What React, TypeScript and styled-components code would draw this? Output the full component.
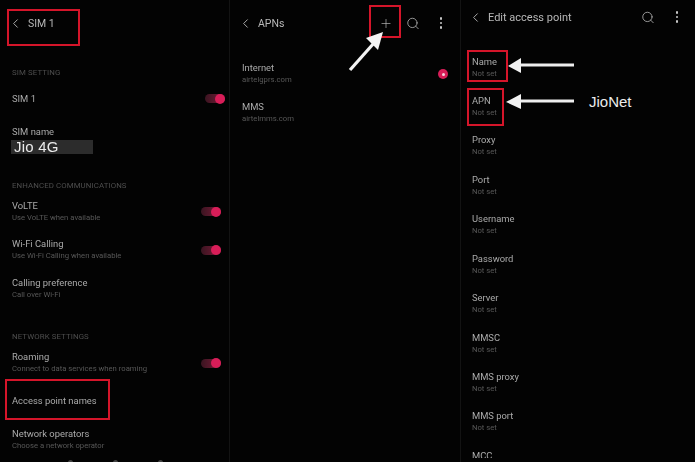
import React from 'react'
import styled, { createGlobalStyle } from 'styled-components'
import { ChevronLeft, Search, Plus } from 'lucide-react'

const GlobalStyle = createGlobalStyle`
  html, body {
    margin: 0;
    padding: 0;
    background: #030303;
  }
`

const Screen = styled.div`
  position: relative;
  width: 695px;
  height: 462px;
  overflow: hidden;
  display: flex;
  background: #030303;
  font-family: Roboto, "Liberation Sans", sans-serif;
`

const Panels = styled.div`
  display: flex;
  width: 100%;
  height: 100%;
  filter: blur(0.45px);
`

const Panel = styled.section<{ $width: number; $pad: number }>`
  width: ${(p) => p.$width}px;
  flex: none;
  box-sizing: border-box;
  padding-left: ${(p) => p.$pad}px;
  border-right: 1px solid #131313;
  overflow: hidden;

  &:last-child {
    border-right: 0;
  }
`

const Header = styled.header<{ $height: number; $back: number; $end?: number }>`
  height: ${(p) => p.$height}px;
  display: flex;
  align-items: center;
  margin-left: ${(p) => p.$back}px;
  padding-right: ${(p) => p.$end ?? 0}px;
  color: #bdbdbd;
`

const HeaderTitle = styled.h1<{ $gap: number; $size?: number }>`
  margin: 0 0 0 ${(p) => p.$gap}px;
  font-size: ${(p) => p.$size ?? 10.5}px;
  font-weight: 400;
  color: #b8b8b8;
  flex: 1;
`

const HeaderIcon = styled.span<{ $gap?: number }>`
  display: flex;
  align-items: center;
  justify-content: center;
  width: 14px;
  margin-left: ${(p) => p.$gap ?? 0}px;
  color: #c4c4c4;
`

const Dots = styled.span`
  display: flex;
  flex-direction: column;
  gap: 2px;
  align-items: center;
  width: 14px;

  i {
    width: 2.6px;
    height: 2.6px;
    border-radius: 50%;
    background: #c8c8c8;
  }
`

const SectionLabel = styled.div<{ $top: number }>`
  margin-top: ${(p) => p.$top}px;
  height: 10px;
  line-height: 10px;
  font-size: 7.85px;
  letter-spacing: 0.1px;
  color: #4e4e4e;
  white-space: nowrap;
`

const Row = styled.div<{ $top: number; $inset?: number }>`
  margin-top: ${(p) => p.$top}px;
  padding-right: ${(p) => p.$inset ?? 0}px;
  display: flex;
  align-items: center;
  justify-content: space-between;
`

const RowText = styled.div`
  min-width: 0;
`

const Title = styled.div`
  height: 12px;
  line-height: 12px;
  font-size: 9.4px;
  color: #ababab;
  white-space: nowrap;
`

const Sub = styled.div`
  height: 12px;
  line-height: 12px;
  font-size: 7.7px;
  color: #585858;
  white-space: nowrap;
`

const NameField = styled.div`
  margin-top: 2.5px;
  width: 82px;
  height: 14px;
  margin-left: -1px;
  padding-left: 3px;
  box-sizing: border-box;
  background: #2c2c2c;
  color: #ececec;
  font-family: "Liberation Sans", Arial, sans-serif;
  font-size: 15px;
  line-height: 14px;
  letter-spacing: 0.2px;
`

const Track = styled.span`
  position: relative;
  display: block;
  width: 20px;
  height: 9px;
  border-radius: 5px;
  background: linear-gradient(to right, #3a1420, #7d1c3a);
`

const Knob = styled.span`
  position: absolute;
  right: 0;
  top: -0.5px;
  width: 10px;
  height: 10px;
  border-radius: 50%;
  background: #d81d58;
`

const Radio = styled.span`
  display: flex;
  align-items: center;
  justify-content: center;
  width: 10px;
  height: 10px;
  border-radius: 50%;
  background: #d81d58;

  &::after {
    content: '';
    width: 3px;
    height: 3px;
    border-radius: 50%;
    background: #f4d4de;
  }
`

const NavHints = styled.div`
  position: absolute;
  left: 68px;
  bottom: -3px;
  display: flex;
  gap: 40px;
  filter: blur(0.6px);

  i {
    width: 5px;
    height: 5px;
    border-radius: 50%;
    background: #444;
  }
`

const RedBox = styled.div<{ $x: number; $y: number; $w: number; $h: number }>`
  position: absolute;
  left: ${(p) => p.$x}px;
  top: ${(p) => p.$y}px;
  width: ${(p) => p.$w}px;
  height: ${(p) => p.$h}px;
  box-sizing: border-box;
  border: 2.5px solid #d5152a;
`

const Overlay = styled.svg`
  position: absolute;
  left: 0;
  top: 0;
  width: 695px;
  height: 462px;
  pointer-events: none;
`

const Note = styled.div`
  position: absolute;
  left: 589px;
  top: 93px;
  font-size: 15px;
  line-height: 18px;
  color: #ececec;
  font-family: "Liberation Sans", Arial, sans-serif;
`

const FieldList = styled.div`
  margin-top: 21.5px;
  height: 402.5px;
  overflow: hidden;
`

const FieldRow = styled.div`
  height: 39.45px;
`

const Toggle = () => (
  <Track>
    <Knob />
  </Track>
)

const fields = ['Name', 'APN', 'Proxy', 'Port', 'Username', 'Password', 'Server', 'MMSC', 'MMS proxy', 'MMS port']

const App = () => {
  return (
    <Screen>
      <GlobalStyle />
      <Panels>
        <Panel $width={230} $pad={12}>
          <Header $height={46} $back={-4.5}>
            <ChevronLeft size={15} strokeWidth={1.4} />
            <HeaderTitle $gap={5.5}>SIM 1</HeaderTitle>
          </Header>
          <SectionLabel $top={22}>SIM SETTING</SectionLabel>
          <Row $top={14.5} $inset={4}>
            <RowText><Title>SIM 1</Title></RowText>
            <Toggle />
          </Row>
          <Row $top={21}>
            <RowText>
              <Title>SIM name</Title>
              <NameField>Jio 4G</NameField>
            </RowText>
          </Row>
          <SectionLabel $top={27}>ENHANCED COMMUNICATIONS</SectionLabel>
          <Row $top={8.5} $inset={8}>
            <RowText>
              <Title>VoLTE</Title>
              <Sub>Use VoLTE when available</Sub>
            </RowText>
            <Toggle />
          </Row>
          <Row $top={14.5} $inset={8}>
            <RowText>
              <Title>Wi-Fi Calling</Title>
              <Sub>Use Wi-Fi Calling when available</Sub>
            </RowText>
            <Toggle />
          </Row>
          <Row $top={15}>
            <RowText>
              <Title>Calling preference</Title>
              <Sub>Call over Wi-Fi</Sub>
            </RowText>
          </Row>
          <SectionLabel $top={31}>NETWORK SETTINGS</SectionLabel>
          <Row $top={9} $inset={8}>
            <RowText>
              <Title>Roaming</Title>
              <Sub>Connect to data services when roaming</Sub>
            </RowText>
            <Toggle />
          </Row>
          <Row $top={20}>
            <RowText><Title>Access point names</Title></RowText>
          </Row>
          <Row $top={21}>
            <RowText>
              <Title>Network operators</Title>
              <Sub>Choose a network operator</Sub>
            </RowText>
          </Row>
        </Panel>

        <Panel $width={231} $pad={12}>
          <Header $height={46} $back={-4.5} $end={12}>
            <ChevronLeft size={15} strokeWidth={1.4} />
            <HeaderTitle $gap={5.5}>APNs</HeaderTitle>
            <HeaderIcon><Plus size={15} strokeWidth={1.1} /></HeaderIcon>
            <HeaderIcon $gap={13}><Search size={15} strokeWidth={1.3} /></HeaderIcon>
            <HeaderIcon $gap={14}><Dots><i /><i /><i /></Dots></HeaderIcon>
          </Header>
          <Row $top={16} $inset={12}>
            <RowText>
              <Title>Internet</Title>
              <Sub>airtelgprs.com</Sub>
            </RowText>
            <Radio />
          </Row>
          <Row $top={15}>
            <RowText>
              <Title>MMS</Title>
              <Sub>airtelmms.com</Sub>
            </RowText>
          </Row>
        </Panel>

        <Panel $width={234} $pad={11}>
          <Header $height={34} $back={-4} $end={11}>
            <ChevronLeft size={15} strokeWidth={1.4} />
            <HeaderTitle $gap={5} $size={11}>Edit access point</HeaderTitle>
            <HeaderIcon><Search size={15} strokeWidth={1.3} /></HeaderIcon>
            <HeaderIcon $gap={15}><Dots><i /><i /><i /></Dots></HeaderIcon>
          </Header>
          <FieldList>
            {fields.map((field) => (
              <FieldRow key={field}>
                <Title>{field}</Title>
                <Sub>Not set</Sub>
              </FieldRow>
            ))}
            <Title>MCC</Title>
          </FieldList>
        </Panel>
      </Panels>

      <NavHints><i /><i /><i /></NavHints>

      <RedBox $x={7} $y={9} $w={73} $h={37} />
      <RedBox $x={5} $y={379} $w={105} $h={41} />
      <RedBox $x={369} $y={5} $w={32} $h={33} />
      <RedBox $x={467} $y={50} $w={41} $h={32} />
      <RedBox $x={467} $y={88} $w={37} $h={38} />

      <Overlay viewBox="0 0 695 462">
        <path d="M350 70 L374 43" stroke="#f4f4f4" strokeWidth="3.2" fill="none" />
        <polygon points="383,32 378,50 366,38" fill="#f4f4f4" />
        <path d="M518 65 H574" stroke="#eeeeee" strokeWidth="2.8" fill="none" />
        <polygon points="508,66 521,58 521,73" fill="#f2f2f2" />
        <path d="M516 101 H574" stroke="#eeeeee" strokeWidth="2.8" fill="none" />
        <polygon points="506,102 521,94 521,109" fill="#f2f2f2" />
      </Overlay>

      <Note>JioNet</Note>
    </Screen>
  )
}

export default App
